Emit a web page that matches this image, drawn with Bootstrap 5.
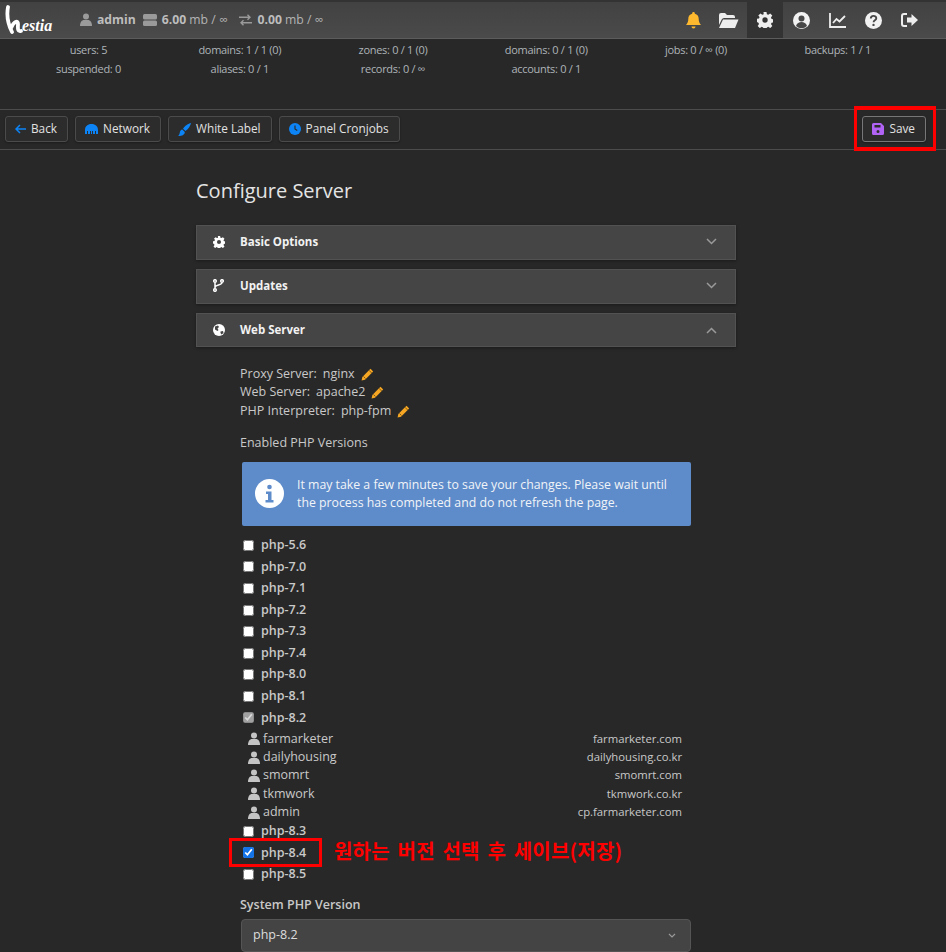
<!DOCTYPE html>
<html lang="en">
<head>
<meta charset="UTF-8">
<title>Configure Server - Hestia</title>
<link href="https://cdn.jsdelivr.net/npm/bootstrap@5.3.0/dist/css/bootstrap.min.css" rel="stylesheet">
<style>
    html, body { height: 952px; overflow: hidden; }
    body { background: #282828; color: #c9c9c9; font-family: "Open Sans", "Noto Sans CJK KR", sans-serif; font-size: 12.5px; position: relative; }
    .top-bar { height: 39px; background: linear-gradient(#424242, #4a4a4a); border-top: 2px solid #333; border-bottom: 1px solid #5c5c5c; padding-left: 4px; }
    .logo-box { width: 76px; color: #fff; font: italic 700 16px "Liberation Serif", serif; line-height: 1; }
    .logo-box svg { margin-right: -9px; }
    .logo-box span { padding-bottom: 2px; }
    .top-stat { color: #b4b4b4; font-size: 12.2px; gap: 5px; margin-right: 7px; }
    .top-stat b { color: #bdbdbd; }
    .top-stat-wide { margin-right: 12px; }
    .top-menu { padding-right: 19px; }
    .top-item { width: 36px; height: 36px; }
    .top-item.is-active { background: #333; }
    .stats-area { height: 70px; padding: 1px 75px 0 56px; color: #aeb4b8; font-size: 11px; letter-spacing: -.3px; line-height: 19px; }
    .stats-col { text-align: center; }
    .tool-bar { height: 41px; border-top: 1px solid #4c4c4c; border-bottom: 1px solid #4c4c4c; padding: 6px 20px 0 5px; }
    .tool-group { gap: 7px; }
    .tool-btn { height: 26px; background: #2c2c2c; border: 1px solid #4b4b4b; color: #e2e2e2; border-radius: 3px; font-size: 11.8px; padding: 0 10px 0 9px; gap: 5px; box-shadow: 0 1px 2px rgba(0,0,0,.3); }
    .save-btn { border-color: #777; }
    .form-wrap { width: 540px; margin-left: 196px; }
    .page-title { font-size: 20px; font-weight: 400; color: #e4e4e4; margin: 27px 0 21px; line-height: 27px; }
    .acc-row { height: 35px; background: #454545; border: 1px solid #525252; margin-bottom: 9px; padding: 0 18px 2px 16px; font-weight: 700; color: #f2f2f2; font-size: 11.5px; box-shadow: 0 1px 3px rgba(0,0,0,.35); }
    .acc-row .acc-icon { width: 27px; }
    .acc-row.is-open { height: 34px; margin-bottom: 0; padding-bottom: 0; }
    .panel-body { padding: 18px 45px 0 44px; line-height: 18.4px; }
    .meta-row { gap: 6px; }
    .enabled-title { margin-top: 14px; }
    .php-note { margin: 9px 0 9px 2px; background: #5e8bc9; color: #f1f4f8; height: 64px; padding: 0 12px 0 13px; border-radius: 2px; gap: 13px; line-height: 18px; font-size: 12.3px; }
    .php-row { height: 21.55px; font-weight: 600; color: #c9c9c9; padding-left: 3px; gap: 7px; }
    .php-row input { width: 11px; height: 11px; margin: 0; accent-color: #1473e6; }
    .php-row input:disabled { opacity: 1; accent-color: #8c8c8c; }
    #siteList { padding-top: 1px; margin-bottom: -1px; }
    .site-row { height: 18.4px; padding: 0 9px 0 8px; }
    .site-user { gap: 3px; }
    .site-domain { font-size: 11.3px; }
    .select-label { font-weight: 600; color: #c9c9c9; margin: 11px 0 5px; line-height: 18px; }
    .php-select { height: 33px; margin-left: 1px; background: #444; border: 1px solid #555; border-radius: 4px; padding: 0 14px 0 11px; color: #ddd; }
    .red-box { position: absolute; border: 3px solid #f00; pointer-events: none; }
    .save-mark { left: 854px; top: 106px; width: 82px; height: 45px; border-width: 4px 3px; }
    .php-mark { left: 229px; top: 838px; width: 93px; height: 29px; }
    .red-note { position: absolute; left: 334px; top: 837px; color: #f00; font: 700 20px/28px "Noto Sans CJK KR", sans-serif; letter-spacing: .2px; word-spacing: 3px; }
</style>
</head>
<body>

<!-- top bar -->
<div class="top-bar d-flex align-items-center">
    <div class="logo-box d-flex align-items-end">
        <svg width="27" height="32" viewBox="0 0 27 32"><path d="M4 3c-1.500 8 0 17 4 25M7 24c3-7 7-8 7-4 0 3-1 8 3 7" fill="none" stroke="#fff" stroke-width="3.800" stroke-linecap="round"/></svg>
        <span>estia</span>
    </div>
    <div class="d-flex align-items-center top-stat">
        <svg width="12" height="13" viewBox="0 0 12 13" fill="#9a9a9a"><circle cx="6" cy="3.500" r="3"/><path d="M0 13c0-4 2-6 4-6h4c2 0 4 2 4 6z"/></svg>
        <b>admin</b>
    </div>
    <div class="d-flex align-items-center top-stat top-stat-wide">
        <svg width="14" height="12" viewBox="0 0 14 12" fill="#9a9a9a"><rect width="14" height="5.500" rx="1.500"/><rect y="6.500" width="14" height="5.500" rx="1.500"/></svg>
        <span><b>6.00</b> mb / ∞</span>
    </div>
    <div class="d-flex align-items-center top-stat">
        <svg width="13" height="12" viewBox="0 0 13 12" fill="none" stroke="#9a9a9a" stroke-width="1.400"><path d="M0 3.200h11M8.500.7 11 3.200 8.500 5.700M13 8.800H2M4.500 6.300 2 8.800l2.500 2.500"/></svg>
        <span><b>0.00</b> mb / ∞</span>
    </div>
    <div class="d-flex ms-auto top-menu">
        <div class="top-item d-flex align-items-center justify-content-center">
            <svg width="15" height="17" viewBox="0 0 15 17" fill="#ffb92e"><path d="M7.500 0a1.300 1.300 0 0 1 1.300 1.300v.5c2.600.5 3.900 2.600 3.900 5 0 3 .8 4.400 2.300 6.200H0C1.500 11.200 2.300 9.800 2.300 6.800c0-2.400 1.300-4.500 3.900-5v-.5A1.300 1.300 0 0 1 7.500 0zM5.500 14.500h4a2 2 0 0 1-4 0z"/></svg>
        </div>
        <div class="top-item d-flex align-items-center justify-content-center">
            <svg width="20" height="15" viewBox="0 0 20 15" fill="#eee"><path d="M0 12V2a2 2 0 0 1 2-2h4l2 2h6a2 2 0 0 1 2 2v1H5a2.500 2.500 0 0 0-2.300 1.500z"/><path d="M4 6.500h15.500L16 15H0z"/></svg>
        </div>
        <div class="top-item is-active d-flex align-items-center justify-content-center">
            <svg width="16" height="16" viewBox="0 0 16 16" fill="#eee"><path fill-rule="evenodd" d="M6.500 0h3l.4 2.200 1.400.6L13.200 1.500l2.100 2.100-1.300 1.900.6 1.400 2.200.4v3l-2.200.4-.6 1.400 1.300 1.900-2.100 2.100-1.900-1.300-1.400.6-.4 2.200h-3l-.4-2.200-1.400-.6-1.900 1.300-2.100-2.100 1.300-1.900-.6-1.400L-.200 9.900v-3l2.200-.4.600-1.400L1.300 3.600 3.400 1.500l1.900 1.300 1.400-.6zM8 5.300a2.700 2.700 0 1 0 0 5.400 2.700 2.700 0 0 0 0-5.400z"/></svg>
        </div>
        <div class="top-item d-flex align-items-center justify-content-center">
            <svg width="17" height="17" viewBox="0 0 17 17"><circle cx="8.500" cy="8.500" r="8.500" fill="#f2f2f2"/><circle cx="8.500" cy="6.500" r="3" fill="#484848"/><path d="M3 14c1-3 3-4 5.500-4s4.500 1 5.500 4a8 8 0 0 1-11 0z" fill="#484848"/></svg>
        </div>
        <div class="top-item d-flex align-items-center justify-content-center">
            <svg width="17" height="15" viewBox="0 0 17 15" fill="none" stroke="#eee" stroke-width="1.800"><path d="M1 0v14h16"/><path d="M4 10l3.500-4 3 2.500L16 3"/></svg>
        </div>
        <div class="top-item d-flex align-items-center justify-content-center">
            <svg width="17" height="17" viewBox="0 0 17 17"><circle cx="8.500" cy="8.500" r="8.500" fill="#f2f2f2"/><path d="M5.800 6.500c0-3.400 5.500-3.400 5.500-.2 0 2-2.700 2-2.700 3.900" fill="none" stroke="#484848" stroke-width="1.900"/><circle cx="8.500" cy="12.900" r="1.200" fill="#484848"/></svg>
        </div>
        <div class="top-item d-flex align-items-center justify-content-center">
            <svg width="17" height="14" viewBox="0 0 17 14"><path d="M6 1H3a2 2 0 0 0-2 2v8a2 2 0 0 0 2 2h3" fill="none" stroke="#eee" stroke-width="2"/><path d="M10.500 1 17 7l-6.500 6V9.500H6v-5h4.500z" fill="#eee"/></svg>
        </div>
    </div>
</div>

<!-- stats -->
<div class="stats-area d-flex justify-content-between">
    <div class="stats-col">users: 5<br>suspended: 0</div>
    <div class="stats-col">domains: 1 / 1 (0)<br>aliases: 0 / 1</div>
    <div class="stats-col">zones: 0 / 1 (0)<br>records: 0 / ∞</div>
    <div class="stats-col">domains: 0 / 1 (0)<br>accounts: 0 / 1</div>
    <div class="stats-col">jobs: 0 / ∞ (0)</div>
    <div class="stats-col">backups: 1 / 1</div>
</div>

<!-- toolbar -->
<div class="tool-bar d-flex">
    <div class="d-flex tool-group">
        <a class="tool-btn d-flex align-items-center text-decoration-none">
            <svg width="11" height="10" viewBox="0 0 11 10" fill="none" stroke="#0d84f5" stroke-width="1.500"><path d="M11 5H1.500M5 1 1 5l4 4"/></svg>Back</a>
        <a class="tool-btn d-flex align-items-center text-decoration-none">
            <svg width="13" height="10" viewBox="0 0 13 10" fill="#0d84f5"><path d="M0 10V6C0 2.500 2.500 0 6.500 0S13 2.500 13 6v4h-2V7h-1v3H8V7H7v3H6V7H5v3H3V7H2v3z"/></svg>Network</a>
        <a class="tool-btn d-flex align-items-center text-decoration-none">
            <svg width="13" height="13" viewBox="0 0 13 13" fill="#0d84f5"><path d="M13 0c-.3 2.500-3 6.500-5.500 8L5 5.700C6.500 3 10.500.3 13 0zM4.300 6.600 6.800 9c0 2.500-2.300 4-6.800 4 1.500-1 1.500-2.200 1.800-3.500.3-1.600 1.200-2.700 2.500-2.900z"/></svg>White Label</a>
        <a class="tool-btn d-flex align-items-center text-decoration-none">
            <svg width="12" height="12" viewBox="0 0 12 12"><circle cx="6" cy="6" r="6" fill="#0d84f5"/><path d="M6 2.500V6l2.300 1.500" fill="none" stroke="#2c2c2c" stroke-width="1.200"/></svg>Panel Cronjobs</a>
    </div>
    <a class="tool-btn save-btn d-flex align-items-center text-decoration-none ms-auto">
        <svg width="12" height="12" viewBox="0 0 12 12" fill="#b163f5"><path fill-rule="evenodd" d="M1.500 0H9l3 3v7.500a1.500 1.500 0 0 1-1.500 1.500h-9A1.500 1.500 0 0 1 0 10.500v-9A1.500 1.500 0 0 1 1.500 0zM2.500 2v2.500h6V2zM6 7a1.500 1.500 0 1 0 0 3 1.500 1.500 0 0 0 0-3z"/></svg>Save</a>
</div>

<!-- form -->
<div class="form-wrap">
    <h1 class="page-title">Configure Server</h1>

    <div class="acc-row d-flex align-items-center">
        <span class="acc-icon d-flex"><svg width="12" height="12" viewBox="0 0 16 16" fill="#fff"><path fill-rule="evenodd" d="M6.500 0h3l.4 2.200 1.400.6L13.200 1.500l2.100 2.100-1.300 1.900.6 1.400 2.200.4v3l-2.200.4-.6 1.400 1.300 1.900-2.100 2.100-1.900-1.300-1.400.6-.4 2.200h-3l-.4-2.200-1.400-.6-1.900 1.300-2.100-2.100 1.300-1.900-.6-1.400L-.200 9.900v-3l2.200-.4.600-1.400L1.300 3.600 3.400 1.500l1.900 1.300 1.400-.6zM8 5.300a2.700 2.700 0 1 0 0 5.400 2.700 2.700 0 0 0 0-5.400z"/></svg></span>
        Basic Options
        <svg class="ms-auto" width="11" height="7" viewBox="0 0 11 7" fill="none" stroke="#9a9a9a" stroke-width="1.500"><path d="m1 1 4.500 4.500L10 1"/></svg>
    </div>
    <div class="acc-row d-flex align-items-center">
        <span class="acc-icon d-flex"><svg width="11" height="13" viewBox="0 0 11 13" fill="none" stroke="#fff" stroke-width="1.500"><circle cx="2" cy="2" r="1.300"/><circle cx="2" cy="11" r="1.300"/><circle cx="9" cy="2" r="1.300"/><path d="M2 3.500v6M9 3.500c0 3-7 2-7 5"/></svg></span>
        Updates
        <svg class="ms-auto" width="11" height="7" viewBox="0 0 11 7" fill="none" stroke="#9a9a9a" stroke-width="1.500"><path d="m1 1 4.500 4.500L10 1"/></svg>
    </div>
    <div class="acc-row is-open d-flex align-items-center">
        <span class="acc-icon d-flex"><svg width="12" height="12" viewBox="0 0 12 12"><circle cx="6" cy="6" r="6" fill="#fff"/><path d="M2 2.500 5 1.500l1 1.500-1.500 1.500L5.500 6l-1 1L2 5.500zM7.500 7.500l2.500-.5.500 2-2 1.500-1-1.500z" fill="#454545"/></svg></span>
        Web Server
        <svg class="ms-auto" width="11" height="7" viewBox="0 0 11 7" fill="none" stroke="#9a9a9a" stroke-width="1.500"><path d="m1 6 4.500-4.500L10 6"/></svg>
    </div>

    <div class="panel-body">
        <div class="meta-row d-flex align-items-center"><span>Proxy Server:</span><span>nginx</span><svg width="13" height="13" viewBox="0 0 13 13"><path d="M9.500.8 12.200 3.500 4 11.700.6 12.400 1.300 9z" fill="#f5a623"/><path d="M8 2.300l2.700 2.700M2.500 8.500l2 2" stroke="#6b4a10" stroke-width=".8"/></svg></div>
        <div class="meta-row d-flex align-items-center"><span>Web Server:</span><span>apache2</span><svg width="13" height="13" viewBox="0 0 13 13"><path d="M9.500.8 12.200 3.500 4 11.700.6 12.400 1.300 9z" fill="#f5a623"/><path d="M8 2.300l2.700 2.700M2.500 8.500l2 2" stroke="#6b4a10" stroke-width=".8"/></svg></div>
        <div class="meta-row d-flex align-items-center"><span>PHP Interpreter:</span><span>php-fpm</span><svg width="13" height="13" viewBox="0 0 13 13"><path d="M9.500.8 12.200 3.500 4 11.700.6 12.400 1.300 9z" fill="#f5a623"/><path d="M8 2.300l2.700 2.700M2.500 8.500l2 2" stroke="#6b4a10" stroke-width=".8"/></svg></div>
        <div class="enabled-title">Enabled PHP Versions</div>

        <div class="php-note d-flex align-items-center">
            <svg class="flex-shrink-0" width="29" height="29" viewBox="0 0 29 29"><circle cx="14.500" cy="14.500" r="14.500" fill="#fff"/><circle cx="14.500" cy="8" r="2.300" fill="#5e8bc9"/><path d="M11 12.500h5.500v8.500H18.500v2.500h-8V21h2.500v-6H11z" fill="#5e8bc9"/></svg>
            <span>It may take a few minutes to save your changes. Please wait until the process has completed and do not refresh the page.</span>
        </div>

        <label class="php-row d-flex align-items-center"><input type="checkbox">php-5.6</label>
        <label class="php-row d-flex align-items-center"><input type="checkbox">php-7.0</label>
        <label class="php-row d-flex align-items-center"><input type="checkbox">php-7.1</label>
        <label class="php-row d-flex align-items-center"><input type="checkbox">php-7.2</label>
        <label class="php-row d-flex align-items-center"><input type="checkbox">php-7.3</label>
        <label class="php-row d-flex align-items-center"><input type="checkbox">php-7.4</label>
        <label class="php-row d-flex align-items-center"><input type="checkbox">php-8.0</label>
        <label class="php-row d-flex align-items-center"><input type="checkbox">php-8.1</label>
        <label class="php-row d-flex align-items-center"><input type="checkbox" checked disabled>php-8.2</label>

        <div id="siteList"></div>

        <label class="php-row d-flex align-items-center"><input type="checkbox">php-8.3</label>
        <label class="php-row d-flex align-items-center"><input type="checkbox" checked>php-8.4</label>
        <label class="php-row d-flex align-items-center"><input type="checkbox">php-8.5</label>

        <div class="select-label">System PHP Version</div>
        <div class="php-select d-flex align-items-center justify-content-between">
            <span>php-8.2</span>
            <svg width="8" height="5" viewBox="0 0 8 5" fill="none" stroke="#999" stroke-width="1.200"><path d="m1 1 3 3 3-3"/></svg>
        </div>
    </div>
</div>

<div class="red-box save-mark"></div>
<div class="red-box php-mark"></div>
<div class="red-note">원하는 버전 선택 후 세이브(저장)</div>

<script>
    // sites on php-8.2
    const sites = [
        ["farmarketer", "farmarketer.com"],
        ["dailyhousing", "dailyhousing.co.kr"],
        ["smomrt", "smomrt.com"],
        ["tkmwork", "tkmwork.co.kr"],
        ["admin", "cp.farmarketer.com"]
    ];
    let html = "";
    sites.forEach(s => {
        html += `<div class="site-row d-flex justify-content-between">
            <span class="site-user d-flex align-items-center">
                <svg width="12" height="13" viewBox="0 0 12 13" fill="#c4c4c4"><circle cx="6" cy="3.500" r="3"/><path d="M0 13c0-4 2-6 4-6h4c2 0 4 2 4 6z"/></svg>${s[0]}
            </span>
            <span class="site-domain">${s[1]}</span>
        </div>`;
    });
    document.getElementById("siteList").innerHTML = html;
</script>
<script src="https://cdn.jsdelivr.net/npm/bootstrap@5.3.0/dist/js/bootstrap.bundle.min.js"></script>
</body>
</html>
